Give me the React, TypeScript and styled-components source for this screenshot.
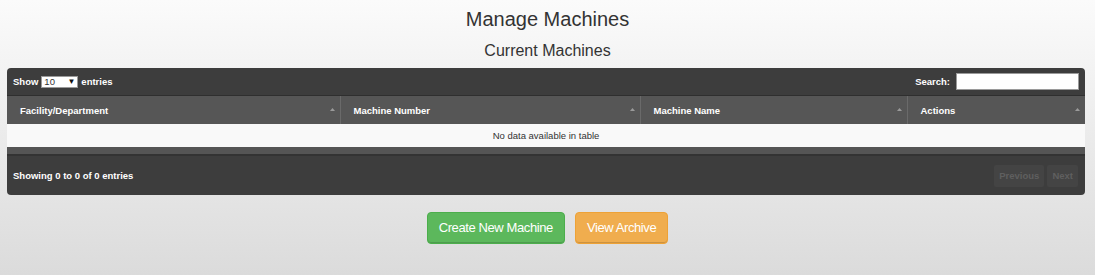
import React from "react";
import styled, { createGlobalStyle } from "styled-components";

const Global = createGlobalStyle`
  html, body { margin: 0; padding: 0; }
  body { font-family: "Liberation Sans", Arial, sans-serif; color: #333; }
`;

const Page = styled.div`
  min-height: 275px;
  box-sizing: border-box;
  background: linear-gradient(#fbfbfb, #dbdbdb);
  padding-top: 7px;
  display: flex;
  flex-direction: column;
`;

const Title = styled.h1`
  margin: 0;
  text-align: center;
  font-size: 20px;
  line-height: 24px;
  font-weight: normal;
  color: #333;
`;

const Subtitle = styled.h2`
  margin: 10px 0 0;
  text-align: center;
  font-size: 16px;
  line-height: 20px;
  font-weight: normal;
  color: #333;
`;

const Wrapper = styled.div`
  margin: 7px 10px 0 7px;
  background: #3d3d3d;
  border-radius: 4px;
  overflow: hidden;
  font-size: 9.5px;
  font-weight: bold;
  color: #fff;
`;

const Toolbar = styled.div`
  height: 27px;
  display: flex;
  align-items: center;
  justify-content: space-between;
  padding: 0 6px 0 6px;
  border-bottom: 1px solid #2f2f2f;
`;

const Label = styled.label`
  display: flex;
  align-items: center;
  gap: 3px;
`;

const Select = styled.span`
  display: inline-flex;
  align-items: center;
  justify-content: space-between;
  width: 31px;
  height: 10px;
  padding: 0 2px;
  background: #fff;
  border: 1px solid #9a9a9a;
  color: #333;
  font-weight: normal;
  font-size: 9.5px;
`;

const Caret = styled.span`
  font-size: 8px;
  color: #111;
`;

const SearchInput = styled.span`
  display: inline-block;
  width: 121px;
  height: 15px;
  background: #fff;
  border: 1px solid #9a9a9a;
  margin-left: 3px;
`;

const Table = styled.table`
  width: 100%;
  border-collapse: collapse;
  table-layout: fixed;
`;

const Th = styled.th`
  height: 28px;
  padding: 0 13px;
  background: #565656;
  text-align: left;
  color: #fff;
  font-size: 9.5px;
  border-left: 1px solid #6a6a6a;
  position: relative;
  &:first-child { border-left: none; }
`;

const SortIcon = styled.svg`
  position: absolute;
  right: 5px;
  top: 12px;
`;

const Td = styled.td`
  height: 23px;
  padding: 0;
  background: #f9f9f9;
  color: #333;
  font-weight: normal;
  text-align: center;
  font-size: 9.5px;
`;

const Strip = styled.div`
  height: 7px;
  background: #555;
  border-bottom: 2px solid #333;
`;

const Footer = styled.div`
  height: 39px;
  display: flex;
  align-items: center;
  justify-content: space-between;
  padding: 0 7px 0 6px;
`;

const Pager = styled.div`
  display: flex;
  gap: 3px;
`;

const PageBtn = styled.span`
  height: 22px;
  padding: 0 5px;
  display: flex;
  align-items: center;
  background: #444;
  border-radius: 2px;
  color: #5f5f5f;
`;

const Buttons = styled.div`
  display: flex;
  justify-content: center;
  gap: 10px;
  margin-top: 17px;
`;

const Button = styled.button<{ $bg: string; $border: string }>`
  font-family: "Liberation Sans", Arial, sans-serif;
  font-size: 13px;
  letter-spacing: -0.4px;
  line-height: 20px;
  height: 32px;
  padding: 0 11px;
  color: #fff;
  background: ${(p) => p.$bg};
  border: 1px solid ${(p) => p.$border};
  border-radius: 4px;
  box-shadow: inset 0 -1px 0 rgba(0,0,0,0.15);
`;

const Sort = () => (
  <SortIcon width="5" height="3" viewBox="0 0 5 3">
    <path d="M0 3 L2.5 0 L5 3 Z" fill="#9a9a9a" />
  </SortIcon>
);

export default function App() {
  return (
    <Page>
      <Global />
      <Title>Manage Machines</Title>
      <Subtitle>Current Machines</Subtitle>
      <Wrapper>
        <Toolbar>
          <Label>
            Show
            <Select>
              10<Caret>▼</Caret>
            </Select>
            entries
          </Label>
          <Label>
            Search:
            <SearchInput />
          </Label>
        </Toolbar>
        <Table>
          <colgroup>
            <col style={{ width: 333 }} />
            <col style={{ width: 300 }} />
            <col style={{ width: 267 }} />
            <col />
          </colgroup>
          <thead>
            <tr>
              <Th>Facility/Department<Sort /></Th>
              <Th>Machine Number<Sort /></Th>
              <Th>Machine Name<Sort /></Th>
              <Th>Actions<Sort /></Th>
            </tr>
          </thead>
          <tbody>
            <tr>
              <Td colSpan={4}>No data available in table</Td>
            </tr>
          </tbody>
        </Table>
        <Strip />
        <Footer>
          <span>Showing 0 to 0 of 0 entries</span>
          <Pager>
            <PageBtn>Previous</PageBtn>
            <PageBtn>Next</PageBtn>
          </Pager>
        </Footer>
      </Wrapper>
      <Buttons>
        <Button $bg="#5cb85c" $border="#4cae4c">Create New Machine</Button>
        <Button $bg="#f0ad4e" $border="#eea236">View Archive</Button>
      </Buttons>
    </Page>
  );
}
